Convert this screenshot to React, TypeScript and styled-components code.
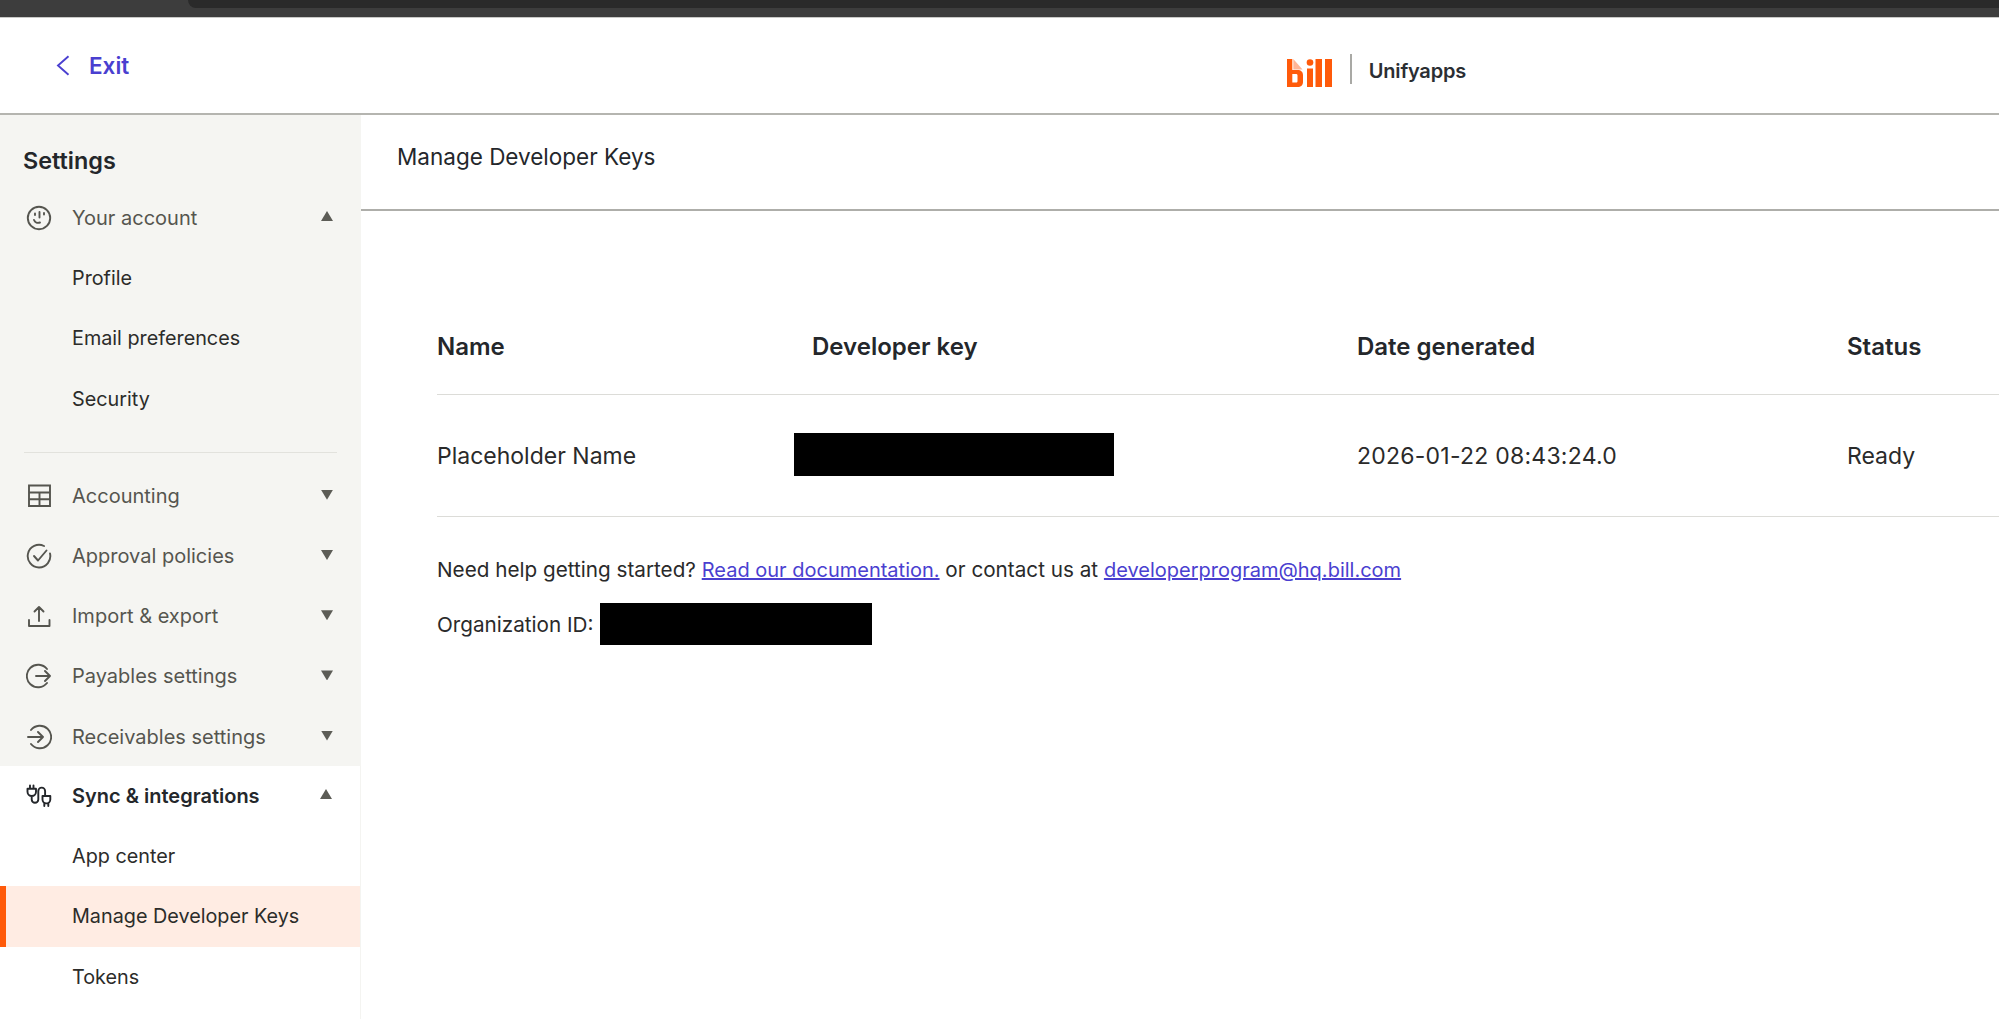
import React from "react";
import styled, { createGlobalStyle } from "styled-components";

const Global = createGlobalStyle`
  html, body { margin: 0; padding: 0; background: #fff; }
  body { font-family: Inter, "Liberation Sans", sans-serif; color: #24272b; overflow: hidden; }
`;

const Page = styled.div`
  width: 1999px; height: 1019px; overflow: hidden;
  display: flex; flex-direction: column; background: #fff;
`;
const Chrome = styled.div`
  height: 18px; flex: none; box-sizing: border-box; background: #3d3d3d; border-bottom: 1px solid #c9c9c7;
  display: flex; justify-content: flex-end;
`;
const ChromeTab = styled.div`
  width: 1811px; height: 8px; background: #2a2a2a; border-bottom-left-radius: 16px;
`;
const Header = styled.header`
  height: 97px; flex: none; box-sizing: border-box; border-bottom: 2px solid #b5b5b0;
  display: flex; align-items: center;
`;
const ExitLink = styled.a`
  display: flex; align-items: center; gap: 19px; margin-left: 56px;
  color: #4a3fd0; font-size: 22.5px; font-weight: 600;
`;
const Brand = styled.div`
  display: flex; align-items: center; height: 33px; margin: 10px 533px 0 auto;
`;
const BrandLogo = styled.svg`
  align-self: flex-end; flex: none;
`;
const BrandRule = styled.div`
  width: 2px; height: 30px; background: #a9a9a5; margin: 0 17px 0 18px; align-self: flex-start;
`;
const BrandName = styled.span`
  font-size: 20px; font-weight: 600; color: #2b2e33; letter-spacing: -0.2px;
`;
const Body = styled.div`
  flex: 1; display: flex; min-height: 0;
`;
const Sidebar = styled.aside`
  width: 361px; flex: none; display: flex; flex-direction: column;
`;
const SidebarTop = styled.div`
  background: #f5f5f2; height: 651px; flex: none;
`;
const SidebarRest = styled.div`
  flex: 1; border-right: 1px solid #f4f4f1;
`;
const SettingsTitle = styled.h2`
  margin: 0; padding: 31px 0 0 23px; height: 73px; box-sizing: border-box;
  font-size: 23.4px; line-height: 30px; font-weight: 600; color: #24272b;
`;
const Row = styled.div<{ $active?: boolean }>`
  height: 60.2px; display: flex; align-items: center; gap: 20px;
  padding: 0 28px 0 26px; font-size: 20px; color: #55554f;
  ${(p) => p.$active && "font-weight: 600; color: #24272b;"}
`;
const IconSlot = styled.span`
  width: 26px; height: 26px; flex: none; display: block;
`;
const Label = styled.span`
  flex: 1; min-width: 0;
`;
const Caret = styled.span<{ $up?: boolean }>`
  flex: none; width: 12px; height: 10px; margin-bottom: ${(p) => (p.$up ? "4px" : "2px")};
  background: #5c5c56;
  clip-path: ${(p) => (p.$up ? "polygon(50% 0, 100% 100%, 0 100%)" : "polygon(0 0, 100% 0, 50% 100%)")};
`;
const SubRow = styled.div<{ $selected?: boolean }>`
  height: 60.2px; display: flex; align-items: center; box-sizing: border-box;
  padding-left: 72px; font-size: 19.8px; color: #2c2c2a;
  ${(p) => p.$selected && `
    background: #ffece3;
    border-left: 6px solid #ff5a0a;
    padding-left: 66px;
  `}
`;
const Divider = styled.div`
  height: 1px; margin: 23px 24px 13px 24px; background: #e2e2dd;
`;
const Main = styled.main`
  flex: 1; min-width: 0;
`;
const MainHead = styled.div`
  height: 96px; box-sizing: border-box; border-bottom: 2px solid #aeaeaa;
  padding: 27px 0 0 36px; font-size: 22.5px; line-height: 30px; color: #24272b;
`;
const Content = styled.div`
  padding: 0 0 0 76px;
`;
const Table = styled.table`
  width: 1562px; border-collapse: collapse; margin-top: 88px; table-layout: fixed;
`;
const Th = styled.th<{ $w: number }>`
  width: ${(p) => p.$w}px; height: 95px; padding: 0; text-align: left;
  font-size: 24px; font-weight: 600; color: #24272b;
`;
const Td = styled.td`
  height: 121px; padding: 0; font-size: 23px; color: #2a2a2a;
`;
const DateCell = styled(Td)`
  letter-spacing: 0.24px;
`;
const TableRow = styled.tr`
  border-bottom: 1px solid #dcdcd8;
`;
const Redacted = styled.div`
  background: #000; flex: none;
`;
const KeyMask = styled(Redacted)`
  width: 320px; height: 43px; margin: 0 0 3px -18px;
`;
const OrgMask = styled(Redacted)`
  width: 272px; height: 42px;
`;
const HelpText = styled.p`
  margin: 40px 0 0; font-size: 20.7px; line-height: 26px; color: #2a2a2a;
`;
const DocLink = styled.a`
  color: #4a3fd0; text-decoration: underline; font-size: 20px;
`;
const OrgRow = styled.div`
  display: flex; align-items: center; gap: 6px; margin-top: 20px; font-size: 20.7px; color: #2a2a2a;
`;

const Svg = ({ children }: { children: React.ReactNode }) => (
  <svg width="26" height="26" viewBox="0 0 26 26" fill="none" stroke="#55554f" strokeWidth="1.9" strokeLinecap="round" strokeLinejoin="round">
    {children}
  </svg>
);

const icons: Record<string, React.ReactNode> = {
  smile: (
    <Svg>
      <circle cx="13" cy="13" r="11.2" />
      <path d="M9 8.500v1.500M13.500 7v5.500M18 8v1.500M8 15c1 2.500 3.500 3.500 6 2.500" />
    </Svg>
  ),
  grid: (
    <Svg>
      <path strokeLinecap="butt" strokeLinejoin="miter" d="M3 2.500h21v20.500H3zM3 9.500h21M3 16.300h21M13.500 9.500v13.500" />
    </Svg>
  ),
  check: (
    <Svg>
      <path d="M24 10.500A11.300 11.300 0 1 1 18 3" />
      <path d="M8 13l4 4.500L20.500 7.500" />
    </Svg>
  ),
  upload: (
    <Svg>
      <path d="M13 18V4M8.500 8.500L13 4l4.500 4.500M3 17v6h20.500v-6" />
    </Svg>
  ),
  out: (
    <Svg>
      <path d="M21 6A11.300 11.300 0 1 0 21 20M10 13h14M19 8l5 5-5 5" />
    </Svg>
  ),
  inn: (
    <Svg>
      <path d="M5 6A11.300 11.300 0 1 1 5 20M2 13h15M12 8l5 5-5 5" />
    </Svg>
  ),
  plug: (
    <svg width="26" height="26" viewBox="0 0 26 26" fill="none" stroke="#24272b" strokeWidth="1.9" strokeLinecap="round" strokeLinejoin="round">
      <path d="M4 2.500v3M7.500 2.500v3M1.500 5.700h8.500v3a4.200 4.200 0 0 1-8.500 0zM5.700 13v3.500a3.300 3.300 0 0 0 6.600 0V8a3.400 3.400 0 0 1 6.800 0v5" />
      <path d="M16.500 13h7.800v3.500a3.900 3.900 0 0 1-7.800 0zM18.300 20v3M22.300 20v3" />
    </svg>
  ),
};

const Icon = ({ name }: { name: string }) => <IconSlot>{icons[name]}</IconSlot>;

const NavRow = ({ icon, label, up, active }: { icon: string; label: string; up?: boolean; active?: boolean }) => (
  <Row $active={active}>
    <Icon name={icon} />
    <Label>{label}</Label>
    <Caret $up={up} />
  </Row>
);

export default function App() {
  return (
    <Page>
      <Global />
      <Chrome><ChromeTab /></Chrome>
      <Header>
        <ExitLink>
          <svg width="14" height="21" viewBox="0 0 14 21" fill="none" stroke="#4a3fd0" strokeWidth="1.9">
            <path d="M12.500 1.200L2 10.500l10.500 9.300" />
          </svg>
          Exit
        </ExitLink>
        <Brand>
          <BrandLogo width="45" height="28" viewBox="0 0 45 28">
            <path fillRule="evenodd" fill="#ff5a0a" d="M0 0H5.300V11H10.500C14 11 16 13 16 16V23C16 26 14 28 10.500 28H0Z M5.300 15V23.500H9C10 23.500 10.500 23 10.500 22V16.500C10.500 15.500 10 15 9 15Z" />
            <path d="M6.300 0L15.500 10.500H6.300Z" fill="#ffb596" />
            <circle cx="23" cy="3.500" r="3.300" fill="#ff5a0a" />
            <path d="M20 9.500h6V28h-6zM28.500 0h6.500v28h-6.500zM38 0h7v28h-7z" fill="#ff5a0a" />
          </BrandLogo>
          <BrandRule />
          <BrandName>Unifyapps</BrandName>
        </Brand>
      </Header>
      <Body>
        <Sidebar>
          <SidebarTop>
            <SettingsTitle>Settings</SettingsTitle>
            <NavRow icon="smile" label="Your account" up />
            <SubRow>Profile</SubRow>
            <SubRow>Email preferences</SubRow>
            <SubRow>Security</SubRow>
            <Divider />
            <NavRow icon="grid" label="Accounting" />
            <NavRow icon="check" label="Approval policies" />
            <NavRow icon="upload" label="Import & export" />
            <NavRow icon="out" label="Payables settings" />
            <NavRow icon="inn" label="Receivables settings" />
          </SidebarTop>
          <SidebarRest>
            <NavRow icon="plug" label="Sync & integrations" up active />
            <SubRow>App center</SubRow>
            <SubRow $selected>Manage Developer Keys</SubRow>
            <SubRow>Tokens</SubRow>
          </SidebarRest>
        </Sidebar>
        <Main>
          <MainHead>Manage Developer Keys</MainHead>
          <Content>
            <Table>
              <thead>
                <TableRow>
                  <Th $w={375}>Name</Th>
                  <Th $w={545}>Developer key</Th>
                  <Th $w={490}>Date generated</Th>
                  <Th $w={152}>Status</Th>
                </TableRow>
              </thead>
              <tbody>
                <TableRow>
                  <Td>Placeholder Name</Td>
                  <Td><KeyMask /></Td>
                  <DateCell>2026-01-22 08:43:24.0</DateCell>
                  <Td>Ready</Td>
                </TableRow>
              </tbody>
            </Table>
            <HelpText>
              Need help getting started? <DocLink>Read our documentation.</DocLink> or contact us at <DocLink>developerprogram@hq.bill.com</DocLink>
            </HelpText>
            <OrgRow>Organization ID: <OrgMask /></OrgRow>
          </Content>
        </Main>
      </Body>
    </Page>
  );
}
